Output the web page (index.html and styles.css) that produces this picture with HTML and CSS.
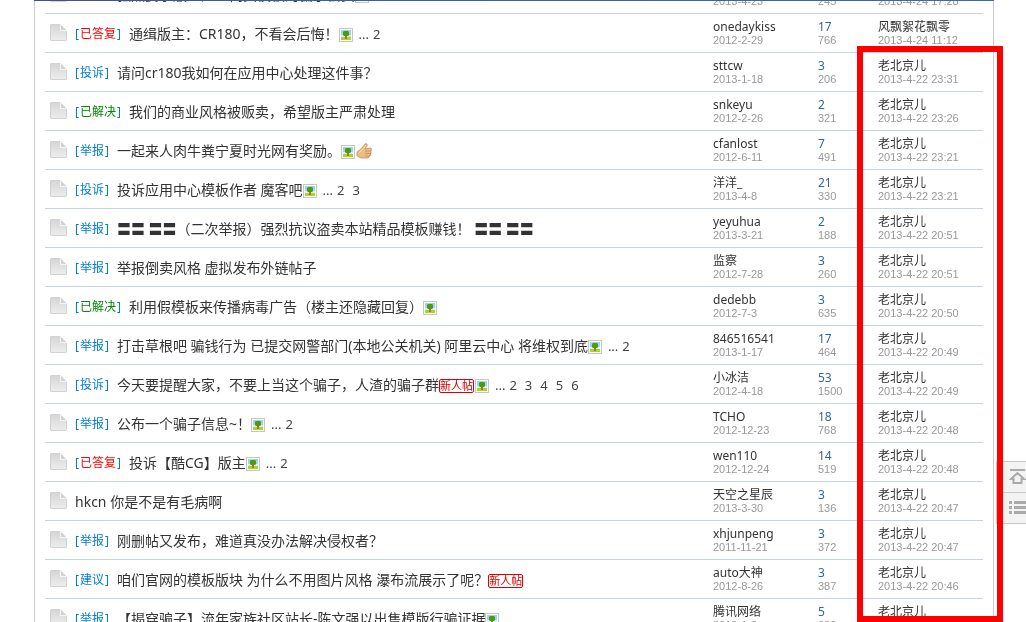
FILE: index.html
```html
<!DOCTYPE html>
<html lang="zh-CN">

<head>
    <meta charset="UTF-8">
    <meta name="viewport" content="width=device-width, initial-scale=1.0">
    <title>版块主题列表</title>
    <link rel="stylesheet" href="styles.css">
</head>

<body>
    <!-- Shared icons -->
    <svg class="sprite" aria-hidden="true">
        <defs>
            <linearGradient id="pageFill" x1="0" y1="0" x2="0" y2="1">
                <stop offset="0" stop-color="#d6d6d6"/>
                <stop offset="1" stop-color="#ececec"/>
            </linearGradient>
        </defs>
        <symbol id="page" viewBox="0 0 17 17">
            <path d="M1 0H10L17 7V16L16 17H1L0 16V1Z" fill="#d2d2d2"/>
            <path d="M1 1H10L16 7V16H1Z" fill="url(#pageFill)"/>
            <path d="M10 0L17 7H10Z" fill="#f4f4f4"/>
            <path d="M11 1L16 6H11Z" fill="#d2d2d2"/>
        </symbol>
        <symbol id="pic" viewBox="0 0 14 14">
            <path d="M0 0H14V14H0Z" fill="#c5c9bd"/>
            <path d="M1 1H13V13H1Z" fill="#fff"/>
            <path d="M2 2H12V9H2Z" fill="#9bd3fa"/>
            <path d="M2 7H12V9H2Z" fill="#d8effc"/>
            <path d="M2 9H12V12H2Z" fill="#a6d62c"/>
            <path d="M6 7H8V11H6Z" fill="#c46a1c"/>
            <path d="M5 3H9L10 4V7L9 8H5L4 7V4Z" fill="#4a9c08"/>
        </symbol>
        <symbol id="thumb" viewBox="0 0 16 16">
            <path d="M1 9L6 5L9 1C10 0 12 1 11 3L9 6L14 5C16 5 16 7 15 7L15 10L14 13L12 15H5L1 13Z" fill="#eebd84" stroke="#b98552" stroke-width=".7"/>
            <path d="M9 8H15M9 10.500H15M9 13H14" fill="none" stroke="#b98552" stroke-width=".7"/>
            <path d="M3 10L7 6L10 2" fill="none" stroke="#fbdcb0"/>
        </symbol>
    </svg>

    <div class="topbar"></div>

    <div class="board">
        <table class="threads">
            <colgroup>
                <col class="col-icon">
                <col>
                <col class="col-by">
                <col class="col-num">
                <col class="col-last">
            </colgroup>
            <tbody id="threadList"></tbody>
        </table>
    </div>

    <div class="highlight"></div>

    <div class="sidetool">
        <button type="button" aria-label="返回顶部">
            <svg width="17" height="16" viewBox="0 0 17 16">
                <path d="M1 0H16V2H1Z" fill="#aaa"/>
                <path d="M8.500 4L2 10H4.500V14H12.500V10H15Z" fill="none" stroke="#aaa" stroke-width="2"/>
            </svg>
        </button>
        <button type="button" aria-label="返回版块">
            <svg width="17" height="14" viewBox="0 0 17 14">
                <path d="M0 0H3V3H0ZM5 0H17V3H5ZM0 5H3V8H0ZM5 5H17V8H5ZM0 10H3V13H0ZM5 10H17V13H5Z" fill="#aaa"/>
            </svg>
        </button>
    </div>

    <script src="threads.js"></script>
</body>

</html>
```
FILE: styles.css
```css
body {
    margin: 0;
    overflow: hidden;
    background-color: #fff;
    color: #333;
    font-family: "Noto Sans", "Noto Sans CJK SC", sans-serif;
    font-size: 12px;
}

a {
    color: #333;
    text-decoration: none;
}

a:hover {
    text-decoration: underline;
}

.sprite {
    position: absolute;
    width: 0;
    height: 0;
}

.topbar {
    position: fixed;
    top: 0;
    left: 34px;
    right: 32px;
    height: 1px;
    background: linear-gradient(to right, #4b4a9c, #2f639a 20%, #3a6ea5);
}

/* the list is scrolled part of a row under the top bar */
.board {
    margin: -25px 32px 0 34px;
    padding: 0 10px;
    border: 1px solid #ccc;
    border-top: 0;
}

.threads {
    width: 100%;
    table-layout: fixed;
    border-collapse: collapse;
}

.threads td {
    height: 38px;
    padding: 0;
    border-bottom: 1px solid #c2d5e3;
    vertical-align: middle;
    white-space: nowrap;
}

.col-icon {
    width: 30px;
}

.col-by {
    width: 105px;
}

.col-num {
    width: 60px;
}

.col-last {
    width: 105px;
}

.page-icon {
    display: block;
    width: 17px;
    height: 17px;
    margin: 0 0 1px 5px;
}

.subject {
    display: flex;
    align-items: center;
    height: 20px;
    padding-top: 2px;
    line-height: 20px;
}

.type {
    margin-right: 8px;
    color: #007cd5;
}

.type a {
    padding: 0 1px;
    color: #007cd5;
}

.type .replied {
    color: #f00;
}

.type .solved {
    color: #080;
}

.title {
    font-size: 14px;
    white-space: pre;
}

.pic,
.thumb {
    width: 14px;
    height: 14px;
    margin: 2px 1px 0 0;
}

.thumb {
    width: 16px;
    height: 16px;
    margin: 0;
}

.newbie {
    height: 12px;
    margin: 2px 1px 0 0;
    border: 1px solid #d00;
    border-radius: 2px;
    color: #d00;
    font-size: 11px;
    line-height: 12px;
}

.pages {
    display: flex;
    gap: 8px;
    margin-left: 5px;
    font-size: 13px;
}

.pages span {
    margin-right: -4px;
}

.pages a,
.pages span {
    color: #444;
}

.cell {
    display: block;
    line-height: 14px;
}

.cell.num {
    color: #336699;
}

.cell small {
    display: block;
    color: #999;
    font-family: "Liberation Sans", Arial, sans-serif;
    font-size: 11px;
    line-height: 12px;
}

.highlight {
    position: absolute;
    top: 46px;
    right: 23px;
    bottom: 0;
    width: 134px;
    border: 6px solid #f00;
    pointer-events: none;
}

.sidetool {
    position: fixed;
    right: 0;
    bottom: 98px;
    z-index: -1;
    width: 29px;
    border: 1px solid #c8c8c8;
    border-right: 0;
    background-color: #f3f3f3;
}

.sidetool button {
    display: flex;
    align-items: center;
    justify-content: flex-end;
    width: 100%;
    height: 30px;
    padding: 0;
    border: 0;
    background: none;
    cursor: pointer;
}

.sidetool button + button {
    height: 31px;
    border-top: 1px solid #c8c8c8;
}
```
FILE: threads.js
```js
const threads = [
    { type: '举报', title: '强烈要求版主处理倒卖模板的骗子会员', icons: ['pic'], by: '监察', date: '2013-4-23', replies: 5, views: 245, last: '老北京儿', time: '2013-4-24 17:28' },
    { type: '已答复', title: '通缉版主：CR180，不看会后悔！', icons: ['pic'], pages: [2], by: 'onedaykiss', date: '2012-2-29', replies: 17, views: 766, last: '风飘絮花飘零', time: '2013-4-24 11:12' },
    { type: '投诉', title: '请问cr180我如何在应用中心处理这件事？', by: 'sttcw', date: '2013-1-18', replies: 3, views: 206, time: '2013-4-22 23:31' },
    { type: '已解决', title: '我们的商业风格被贩卖，希望版主严肃处理', by: 'snkeyu', date: '2012-2-26', replies: 2, views: 321, time: '2013-4-22 23:26' },
    { type: '举报', title: '一起来人肉牛粪宁夏时光网有奖励。', icons: ['pic', 'thumb'], by: 'cfanlost', date: '2012-6-11', replies: 7, views: 491, time: '2013-4-22 23:21' },
    { type: '投诉', title: '投诉应用中心模板作者 魔客吧', icons: ['pic'], pages: [2, 3], by: '洋洋_', date: '2013-4-8', replies: 21, views: 330, time: '2013-4-22 23:21' },
    { type: '举报', title: '〓〓 〓〓（二次举报）强烈抗议盗卖本站精品模板赚钱！ 〓〓 〓〓', by: 'yeyuhua', date: '2013-3-21', replies: 2, views: 188, time: '2013-4-22 20:51' },
    { type: '举报', title: '举报倒卖风格 虚拟发布外链帖子', by: '监察', date: '2012-7-28', replies: 3, views: 260, time: '2013-4-22 20:51' },
    { type: '已解决', title: '利用假模板来传播病毒广告（楼主还隐藏回复）', icons: ['pic'], by: 'dedebb', date: '2012-7-3', replies: 3, views: 635, time: '2013-4-22 20:50' },
    { type: '举报', title: '打击草根吧 骗钱行为 已提交网警部门(本地公关机关) 阿里云中心 将维权到底', icons: ['pic'], pages: [2], by: '846516541', date: '2013-1-17', replies: 17, views: 464, time: '2013-4-22 20:49' },
    { type: '投诉', title: '今天要提醒大家，不要上当这个骗子，人渣的骗子群', icons: ['new', 'pic'], pages: [2, 3, 4, 5, 6], by: '小冰洁', date: '2012-4-18', replies: 53, views: 1500, time: '2013-4-22 20:49' },
    { type: '举报', title: '公布一个骗子信息~！', icons: ['pic'], pages: [2], by: 'TCHO', date: '2012-12-23', replies: 18, views: 768, time: '2013-4-22 20:48' },
    { type: '已答复', title: '投诉【酷CG】版主', icons: ['pic'], pages: [2], by: 'wen110', date: '2012-12-24', replies: 14, views: 519, time: '2013-4-22 20:48' },
    { title: 'hkcn 你是不是有毛病啊', by: '天空之星辰', date: '2013-3-30', replies: 3, views: 136, time: '2013-4-22 20:47' },
    { type: '举报', title: '刚删帖又发布，难道真没办法解决侵权者？', by: 'xhjunpeng', date: '2011-11-21', replies: 3, views: 372, time: '2013-4-22 20:47' },
    { type: '建议', title: '咱们官网的模板版块 为什么不用图片风格 瀑布流展示了呢？', icons: ['new'], by: 'auto大神', date: '2012-8-26', replies: 3, views: 387, time: '2013-4-22 20:46' },
    { type: '举报', title: '【揭穿骗子】流年家族社区站长-陈文强以出售模版行骗证据', icons: ['pic'], by: '腾讯网络', date: '2013-1-8', replies: 5, views: 232, time: '2013-4-22 20:46' }
];

const typeClass = { '已答复': 'replied', '已解决': 'solved' };

const icon = {
    pic: '<svg class="pic"><use href="#pic"/></svg>',
    thumb: '<svg class="thumb"><use href="#thumb"/></svg>',
    new: '<span class="newbie">新人帖</span>'
};

document.getElementById('threadList').innerHTML = threads.map(t => {
    const type = t.type ? `<span class="type">[<a href="#" class="${typeClass[t.type] || ''}">${t.type}</a>]</span>` : '';
    const icons = (t.icons || []).map(name => icon[name]).join('');
    const pages = t.pages ? `<span class="pages"><span>...</span>${t.pages.map(p => `<a href="#">${p}</a>`).join('')}</span>` : '';

    return `<tr>
        <td><svg class="page-icon"><use href="#page"/></svg></td>
        <td><div class="subject">${type}<a href="#" class="title">${t.title}</a>${icons}${pages}</div></td>
        <td><div class="cell"><a href="#">${t.by}</a><small>${t.date}</small></div></td>
        <td><div class="cell num">${t.replies}<small>${t.views}</small></div></td>
        <td><div class="cell"><a href="#">${t.last || '老北京儿'}</a><small>${t.time}</small></div></td>
    </tr>`;
}).join('');
```
